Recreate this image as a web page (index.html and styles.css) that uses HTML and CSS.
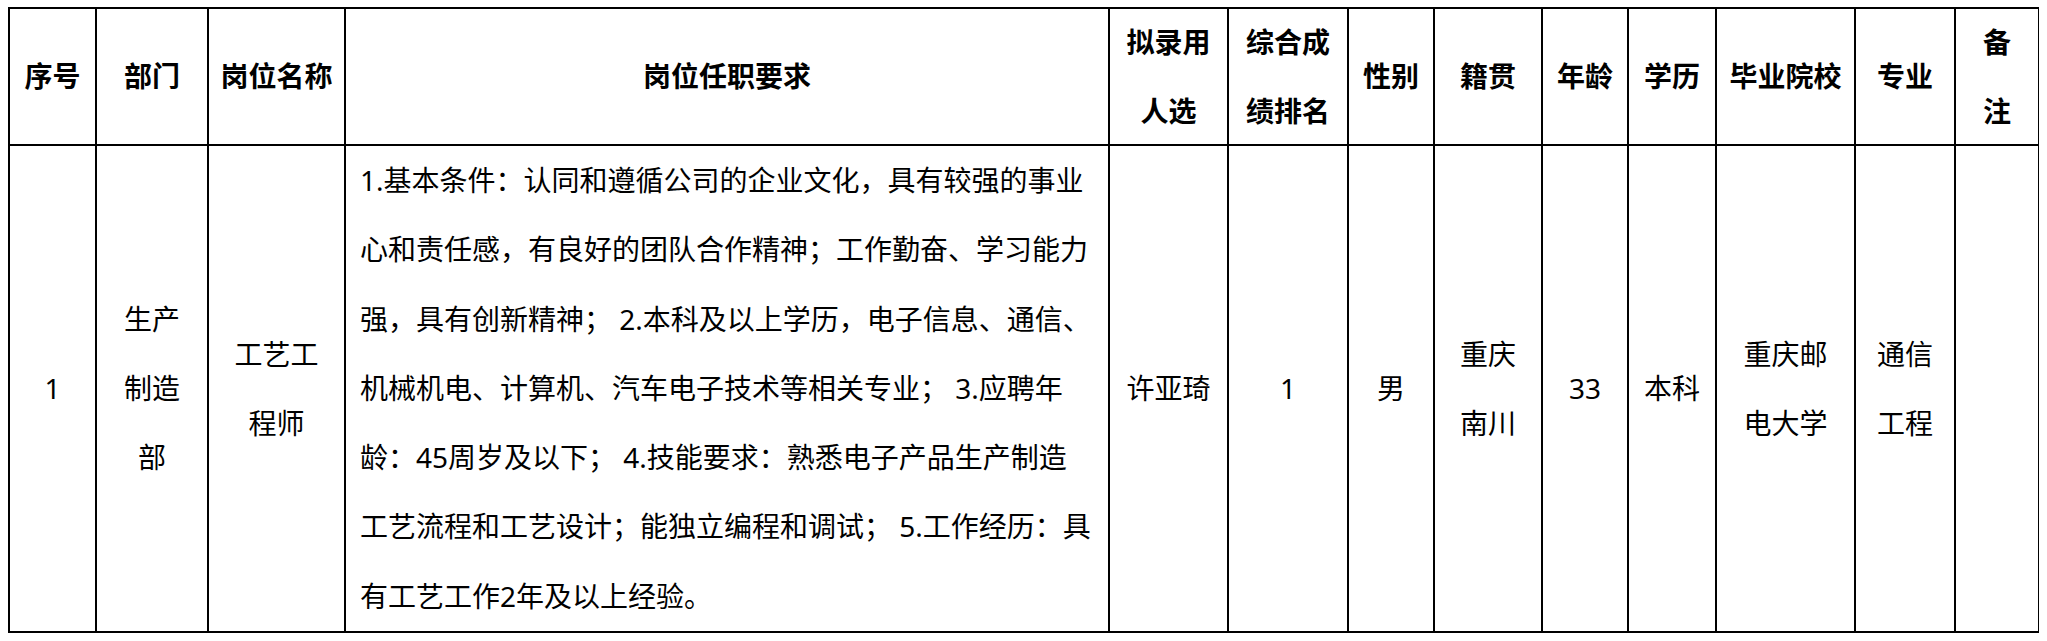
FILE: index.html
```html
<!DOCTYPE html>
<html lang="zh-CN">
<head>
<meta charset="utf-8">
<title>拟录用人选</title>
<link rel="stylesheet" href="styles.css">
</head>
<body>
<div class="sheet">
  <div class="cell head">序号</div>
  <div class="cell head">部门</div>
  <div class="cell head">岗位名称</div>
  <div class="cell head">岗位任职要求</div>
  <div class="cell head">拟录用<br>人选</div>
  <div class="cell head">综合成<br>绩排名</div>
  <div class="cell head">性别</div>
  <div class="cell head">籍贯</div>
  <div class="cell head">年龄</div>
  <div class="cell head">学历</div>
  <div class="cell head">毕业院校</div>
  <div class="cell head">专业</div>
  <div class="cell head">备<br>注</div>

  <div class="cell">1</div>
  <div class="cell">生产<br>制造<br>部</div>
  <div class="cell">工艺工<br>程师</div>
  <div class="cell req">1.基本条件：认同和遵循公司的企业文化，具有较强的事业<br>心和责任感，有良好的团队合作精神；工作勤奋、学习能力<br>强，具有创新精神； 2.本科及以上学历，电子信息、通信、<br>机械机电、计算机、汽车电子技术等相关专业； 3.应聘年<br>龄：45周岁及以下； 4.技能要求：熟悉电子产品生产制造<br>工艺流程和工艺设计；能独立编程和调试； 5.工作经历：具<br>有工艺工作2年及以上经验。</div>
  <div class="cell">许亚琦</div>
  <div class="cell">1</div>
  <div class="cell">男</div>
  <div class="cell">重庆<br>南川</div>
  <div class="cell">33</div>
  <div class="cell">本科</div>
  <div class="cell">重庆邮<br>电大学</div>
  <div class="cell">通信<br>工程</div>
  <div class="cell"></div>
</div>
</body>
</html>
```
FILE: styles.css
```css
html, body {
  background: #ffffff;
}

body {
  margin: 7px 8px;
  font-family: "Noto Sans", "Noto Sans CJK SC", sans-serif;
  font-size: 28px;
  color: #000000;
}

.sheet {
  display: grid;
  grid-template-columns: 87px 112px 137px 764px 119px 120px 86px 108px 86px 88px 139px 100px 84px;
  grid-template-rows: 137px 487px;
  width: max-content;
  border-left: 2px solid #000000;
  border-top: 2px solid #000000;
}

.cell {
  box-sizing: border-box;
  border-right: 2px solid #000000;
  border-bottom: 2px solid #000000;
  display: flex;
  align-items: center;
  justify-content: center;
  text-align: center;
  line-height: 69px;
  white-space: nowrap;
  overflow: hidden;
}

.head {
  font-weight: 700;
}

.req {
  justify-content: flex-start;
  text-align: left;
  padding-left: 14px;
  line-height: 69.3px;
}
```
